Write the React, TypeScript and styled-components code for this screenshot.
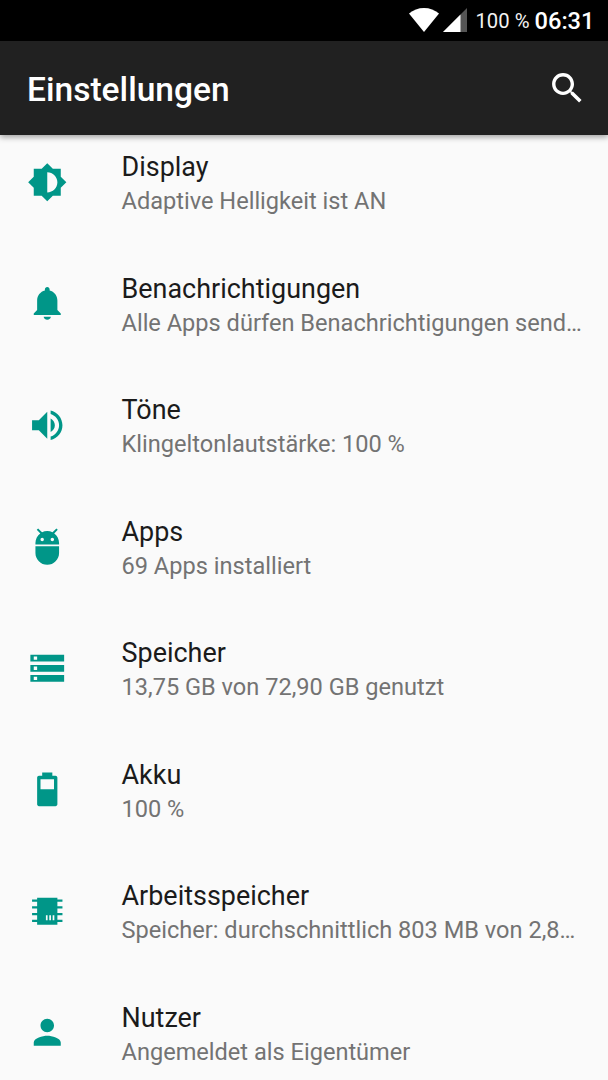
import React from "react";
import styled, { createGlobalStyle } from "styled-components";

const GlobalStyle = createGlobalStyle`
  * { box-sizing: border-box; }
  body { margin: 0; background: #fafafa; font-family: Roboto, sans-serif; }
`;

const Screen = styled.div`
  display: flex;
  flex-direction: column;
  width: 608px;
  height: 1080px;
  overflow: hidden;
  background: #fafafa;
`;

const StatusBar = styled.div`
  flex: none;
  display: flex;
  justify-content: flex-end;
  align-items: center;
  height: 40.5px;
  padding-right: 13.5px;
  background: #000;
  color: #fff;
`;

const StatusIcon = styled.svg<{ $gap: number }>`
  display: block;
  flex: none;
  margin-right: ${(p) => p.$gap}px;
`;

const BatteryLevel = styled.span`
  font-size: 20.27px;
  line-height: 40px;
  margin-right: 5px;
  padding-top: 2px;
  color: #f2f2f2;
  white-space: nowrap;
`;

const Clock = styled.span`
  font-size: 23.65px;
  font-weight: 500;
  line-height: 40px;
  padding-top: 2px;
`;

const AppBar = styled.header`
  position: relative;
  z-index: 1;
  flex: none;
  display: flex;
  align-items: center;
  justify-content: space-between;
  height: 94.5px;
  padding: 0 20px 0 27px;
  background: #212121;
  color: #fff;
  box-shadow: 0 2px 6px rgba(0, 0, 0, 0.38);
`;

const Heading = styled.h1`
  margin: 0;
  padding-top: 4px;
  font-size: 33.55px;
  font-weight: 500;
  line-height: 40px;
`;

const SearchIcon = styled.svg`
  display: block;
  width: 40.53px;
  height: 40.53px;
  margin-top: 1px;
`;

const List = styled.ul`
  flex: none;
  list-style: none;
  margin: -13.5px 0 0;
  padding: 0;
`;

const Row = styled.li`
  display: flex;
  align-items: center;
  height: 121.5px;
  padding: 0 27px;
`;

const RowIcon = styled.svg`
  display: block;
  flex: none;
  width: 40.53px;
  height: 40.53px;
  margin-right: 54px;
  fill: #009688;
`;

const RowText = styled.div`
  min-width: 0;
  padding-top: 4px;
`;

const Title = styled.div`
  font-size: 26.95px;
  line-height: 34px;
  color: #1b1b1b;
  white-space: nowrap;
`;

const Summary = styled.div`
  font-size: 23.58px;
  line-height: 34px;
  color: #737373;
  white-space: nowrap;
`;

type Setting = { title: string; summary: string; icon: string };

const settings: Setting[] = [
  {
    title: "Display",
    summary: "Adaptive Helligkeit ist AN",
    icon: "M20 15.31L23.31 12 20 8.69V4h-4.69L12 .69 8.69 4H4v4.69L.69 12 4 15.31V20h4.69L12 23.31 15.31 20H20v-4.69zM12 18V6c3.31 0 6 2.69 6 6s-2.69 6-6 6z",
  },
  {
    title: "Benachrichtigungen",
    summary: "Alle Apps dürfen Benachrichtigungen send…",
    icon: "M12 21.7c1.2 0 2.1-.7 2.1-1.7H9.9c0 1 .9 1.700 2.100 1.700zM18 16v-5.600c0-2.900-1.900-5.200-4.600-5.900V3.700c0-.75-.6-1.350-1.400-1.350s-1.400.6-1.400 1.350v.8C7.900 5.200 6 7.500 6 10.400V16l-2 2v.9h16V18l-2-2z",
  },
  {
    title: "Töne",
    summary: "Klingeltonlautstärke: 100 %",
    icon: "M3 9v6h4l5 5V4L7 9H3zm13.5 3c0-1.77-1.02-3.29-2.5-4.03v8.05c1.48-.73 2.5-2.25 2.5-4.02zM14 3.23v2.06c2.89.86 5 3.54 5 6.71s-2.11 5.85-5 6.71v2.06c4.01-.91 7-4.49 7-8.77s-2.99-7.86-7-8.77z",
  },
  {
    title: "Apps",
    summary: "69 Apps installiert",
    icon: "M5 16c0 3.87 3.13 7 7 7s7-3.13 7-7v-4H5v4zM16.12 4.37l2.1-2.1-.82-.83-2.3 2.31C14.16 3.28 13.12 3 12 3s-2.16.28-3.09.75L6.6 1.44l-.82.83 2.1 2.1C6.14 5.64 5 7.68 5 10v1h14v-1c0-2.32-1.14-4.36-2.88-5.63zM9 9c-.55 0-1-.45-1-1s.45-1 1-1 1 .45 1 1-.45 1-1 1zm6 0c-.55 0-1-.45-1-1s.45-1 1-1 1 .45 1 1-.45 1-1 1z",
  },
  {
    title: "Speicher",
    summary: "13,75 GB von 72,90 GB genutzt",
    icon: "M2 20h20v-4H2v4zm2-3h2v2H4v-2zM2 4v4h20V4H2zm4 3H4V5h2v2zm-4 7h20v-4H2v4zm2-3h2v2H4v-2z",
  },
  {
    title: "Akku",
    summary: "100 %",
    icon: "M16.9 4H15V2H9v2H7.1C6.5 4 6 4.5 6 5.1v15.8c0 .6.5 1.1 1.1 1.1h9.8c.6 0 1.1-.5 1.1-1.1V5.1c0-.6-.5-1.1-1.1-1.1zM16 12H8V6h8v6z",
  },
  {
    title: "Arbeitsspeicher",
    summary: "Speicher: durchschnittlich 803 MB von 2,8…",
    icon: "M6 4h12v1h3v1.4h-3V9h3v1.4h-3V13h3v1.4h-3V17h3v1.4h-3V20H6v-1.6H3V17h3v-2.6H3V13h3v-2.6H3V9h3V6.4H3V5h3zM11.2 14.4v3h1v-3zm2 0v3h1v-3zm2 0v3h1v-3z",
  },
  {
    title: "Nutzer",
    summary: "Angemeldet als Eigentümer",
    icon: "M12 12c2.21 0 4-1.79 4-4s-1.79-4-4-4-4 1.79-4 4 1.79 4 4 4zm0 2c-2.67 0-8 1.34-8 4v2h16v-2c0-2.66-5.33-4-8-4z",
  },
];

export default function App() {
  return (
    <>
      <GlobalStyle />
      <Screen>
        <StatusBar>
          <StatusIcon $gap={3.5} width="30" height="24" viewBox="0 0 30 24">
            <path d="M15 24L0 5.5C4.2 2 9.3 0 15 0s10.8 2 15 5.5z" fill="#fff" />
          </StatusIcon>
          <StatusIcon $gap={8.5} width="24" height="24" viewBox="0 0 24 24">
            <path d="M0 24L24 0v24z" fill="#555" />
            <path d="M0 24L17.5 6.5V24z" fill="#fff" />
          </StatusIcon>
          <BatteryLevel>100 %</BatteryLevel>
          <Clock>06:31</Clock>
        </StatusBar>
        <AppBar>
          <Heading>Einstellungen</Heading>
          <SearchIcon viewBox="0 0 24 24">
            <path
              fill="#fff"
              d="M15.5 14h-.79l-.28-.27C15.41 12.59 16 11.11 16 9.5 16 5.91 13.09 3 9.5 3S3 5.91 3 9.5 5.91 16 9.5 16c1.61 0 3.09-.59 4.23-1.57l.27.28v.79l5 4.99L20.49 19l-4.99-5zm-6 0C7.01 14 5 11.99 5 9.5S7.01 5 9.5 5 14 7.01 14 9.5 11.99 14 9.5 14z"
            />
          </SearchIcon>
        </AppBar>
        <List>
          {settings.map((s) => (
            <Row key={s.title}>
              <RowIcon viewBox="0 0 24 24">
                <path fillRule="evenodd" d={s.icon} />
              </RowIcon>
              <RowText>
                <Title>{s.title}</Title>
                <Summary>{s.summary}</Summary>
              </RowText>
            </Row>
          ))}
        </List>
      </Screen>
    </>
  );
}
